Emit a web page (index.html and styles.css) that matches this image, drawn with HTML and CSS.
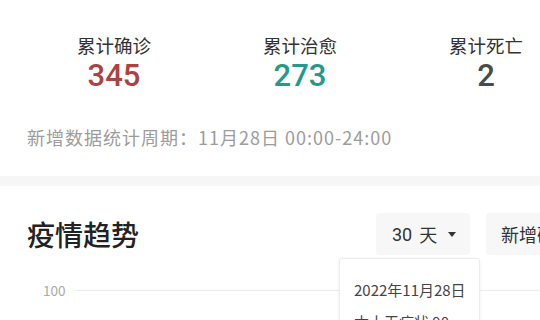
FILE: index.html
```html
<!DOCTYPE html>
<html lang="zh">
<head>
<meta charset="utf-8">
<link rel="stylesheet" href="styles.css">
</head>
<body>
<div class="page">
  <section class="summary">
    <div class="stats">
      <div class="stat"><div class="label">累计确诊</div><div class="num red">345</div></div>
      <div class="stat"><div class="label">累计治愈</div><div class="num teal">273</div></div>
      <div class="stat"><div class="label">累计死亡</div><div class="num dark">2</div></div>
    </div>
    <div class="period">新增数据统计周期：11月28日 00:00-24:00</div>
  </section>
  <div class="band"></div>
  <section class="trend">
    <div class="trend-head">
      <h2 class="title">疫情趋势</h2>
      <div class="controls">
        <div class="btn"><span class="days">30</span><span class="unit">天</span><span class="caret"></span></div>
        <div class="btn wide">新增确诊</div>
      </div>
    </div>
    <div class="chart">
      <div class="axis-row"><span class="tick">100</span><span class="grid"></span></div>
      <div class="tooltip">
        <div class="tip-date">2022年11月28日</div>
        <div class="tip-line">本土无症状 90</div>
      </div>
    </div>
  </section>
</div>
</body>
</html>
```
FILE: styles.css
```css
* { box-sizing: border-box; }
html, body { margin: 0; padding: 0; background: #fff; }
body { width: 540px; height: 320px; overflow: hidden; font-family: "Noto Sans CJK SC", "Noto Sans", sans-serif; }
.page { width: 600px; }
.summary { padding: 32px 0 0 0; }
.stats { display: grid; grid-template-columns: 186px 186px 186px; padding-left: 21px; }
.stat { text-align: center; }
.label { font-size: 18.5px; line-height: 26px; color: #333; }
.num { font-size: 31px; line-height: 36px; font-family: "Roboto", "Noto Sans", sans-serif; font-weight: 500; }
.red { color: #ab4243; }
.teal { color: #25998b; }
.dark { color: #4a4a4a; }
.period { margin-top: 32px; padding-left: 27px; font-size: 18px; letter-spacing: 1px; line-height: 22px; color: #9c9c9c; }
.band { height: 10px; background: #f6f6f6; margin-top: 28px; }
.trend { padding: 27px 0 0 27px; }
.trend-head { display: flex; align-items: center; }
.title { margin: 0; font-size: 28px; font-weight: 500; color: #222; line-height: 42px; width: 349px; }
.controls { display: flex; gap: 16px; }
.btn { height: 42px; background: #f7f7f7; border-radius: 3px; display: flex; align-items: center; width: 94px; font-size: 18px; color: #333; padding-left: 16px; }
.days { font-family: "Roboto", "Noto Sans", sans-serif; }
.unit { margin-left: 7px; }
.btn.wide { width: 110px; padding-left: 15px; }
.caret { width: 0; height: 0; border-left: 4.5px solid transparent; border-right: 4.5px solid transparent; border-top: 5px solid #333; margin-left: 11px; }
.chart { position: relative; height: 80px; }
.axis-row { display: flex; align-items: center; padding-top: 26px; margin-left: 16px; }
.tick { font-size: 13.5px; color: #a8a8a8; width: 32px; line-height: 18px; }
.grid { flex: 1; height: 1px; background: #ececec; }
.tooltip { position: absolute; left: 312px; top: 3px; width: 141px; height: 90px; background: #fff; border: 1px solid #ececec; border-radius: 3px; box-shadow: 0 1px 4px rgba(0,0,0,0.06); padding: 21px 0 0 14px; }
.tip-date { font-size: 15px; color: #444; line-height: 20px; }
.tip-line { font-size: 15px; color: #444; line-height: 20px; margin-top: 12px; }
```
